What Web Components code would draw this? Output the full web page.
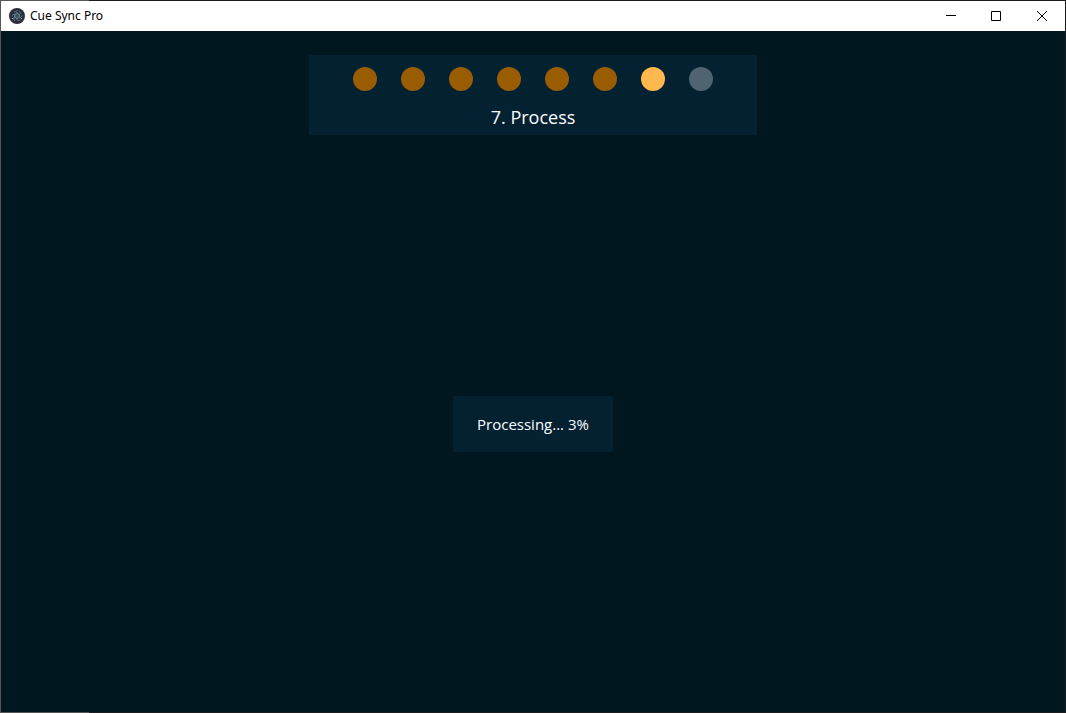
<!DOCTYPE html>
<html lang="en">
<head>
<meta charset="utf-8">
<title>Cue Sync Pro</title>
<style>
  html, body { height: 100%; }
  body { margin: 0; background: #00171f; font-family: "Open Sans", "Noto Sans", sans-serif; }
</style>
</head>
<body>
<app-window>
  <title-bar slot="bar">Cue Sync Pro</title-bar>
  <step-progress total="8" current="7">Process</step-progress>
  <status-panel>Processing... 3%</status-panel>
</app-window>
<script>
class Base extends HTMLElement {
  connectedCallback() {
    if (!this.shadowRoot) this.attachShadow({ mode: "open" }).innerHTML = this.render();
  }
}

customElements.define("app-window", class extends Base {
  render() {
    return `<style>
      :host {
        display: flex; flex-direction: column; box-sizing: border-box; min-height: 100vh;
        padding: 1px;
        background:
          linear-gradient(#00171f, #00171f) content-box,
          linear-gradient(#555, #555) left / 89px 100% no-repeat border-box,
          #1c1c20;
      }
      main { flex: 1; display: flex; flex-direction: column; align-items: center; padding-top: 24px; background: #00171f; }
    </style>
    <slot name="bar"></slot>
    <main><slot></slot></main>`;
  }
});

customElements.define("title-bar", class extends Base {
  render() {
    return `<style>
      :host { display: block; background: #fff; color: #000; }
      header { display: flex; align-items: center; height: 30px; padding-left: 8px; }
      h1 { flex: 1; margin: 0 0 0 5px; font-family: "Noto Sans", "Open Sans", sans-serif; font-size: 12px; line-height: 16px; font-weight: 400; }
      button { width: 46px; height: 30px; padding: 0; border: 0; background: none; color: #000; display: grid; place-items: center; }
      button:hover { background: #e5e5e5; }
      nav { display: flex; }
      svg { display: block; }
    </style>
    <header>
      <svg width="16" height="16" viewBox="0 0 16 16" aria-hidden="true">
        <circle cx="8" cy="8" r="8" fill="#2b2e3a"/>
        <g fill="none" stroke="#9feaf9" stroke-width=".5" opacity=".7">
          <ellipse cx="8" cy="8" rx="5.2" ry="2" stroke-dasharray="9 2"/>
          <ellipse cx="8" cy="8" rx="5.2" ry="2" stroke-dasharray="9 2" transform="rotate(60 8 8)"/>
          <ellipse cx="8" cy="8" rx="5.2" ry="2" stroke-dasharray="9 2" transform="rotate(120 8 8)"/>
        </g>
        <g fill="#9feaf9" opacity=".8"><circle cx="8" cy="8" r=".6"/><circle cx="3.6" cy="10.6" r=".6"/><circle cx="12.4" cy="10.6" r=".6"/><circle cx="8" cy="2.8" r=".5"/></g>
      </svg>
      <h1><slot></slot></h1>
      <nav aria-label="Window">
        <button type="button" aria-label="Minimize"><svg width="12" height="10"><path d="M2 4.5h10" stroke="#000"/></svg></button>
        <button type="button" aria-label="Maximize"><svg width="10" height="10"><path d="M.5.5h9v9h-9z" fill="none" stroke="#000"/></svg></button>
        <button type="button" aria-label="Close"><svg width="10" height="10"><path d="M0 0l10 10M10 0L0 10" stroke="#000"/></svg></button>
      </nav>
    </header>`;
  }
});

customElements.define("step-progress", class extends Base {
  render() {
    const total = Number(this.getAttribute("total"));
    const current = Number(this.getAttribute("current"));
    const dots = Array.from({ length: total }, (_, i) => {
      const state = i + 1 < current ? "done" : i + 1 === current ? "now" : "todo";
      return `<li class="${state}" aria-label="Step ${i + 1}"></li>`;
    }).join("");
    return `<style>
      :host { display: block; box-sizing: border-box; padding: 12px 44px 4px; background: #032130; color: #fff; }
      ol { display: flex; gap: 24px; margin: 0; padding: 0; list-style: none; }
      li { width: 24px; height: 24px; border-radius: 50%; }
      .done { background: #995c00; }
      .now { background: #ffb84d; }
      .todo { background: #4f6470; }
      h2 { margin: 12px 0 0; font-size: 18px; line-height: 28px; font-weight: 400; text-align: center; }
    </style>
    <ol>${dots}</ol>
    <h2>${current}. <slot></slot></h2>`;
  }
});

customElements.define("status-panel", class extends Base {
  render() {
    return `<style>
      :host { display: block; margin: auto; padding: 16px 24px; background: #032130; color: #fff; }
      p { margin: 0; font-size: 15px; line-height: 24px; }
    </style>
    <p role="status"><slot></slot></p>`;
  }
});
</script>
</body>
</html>
